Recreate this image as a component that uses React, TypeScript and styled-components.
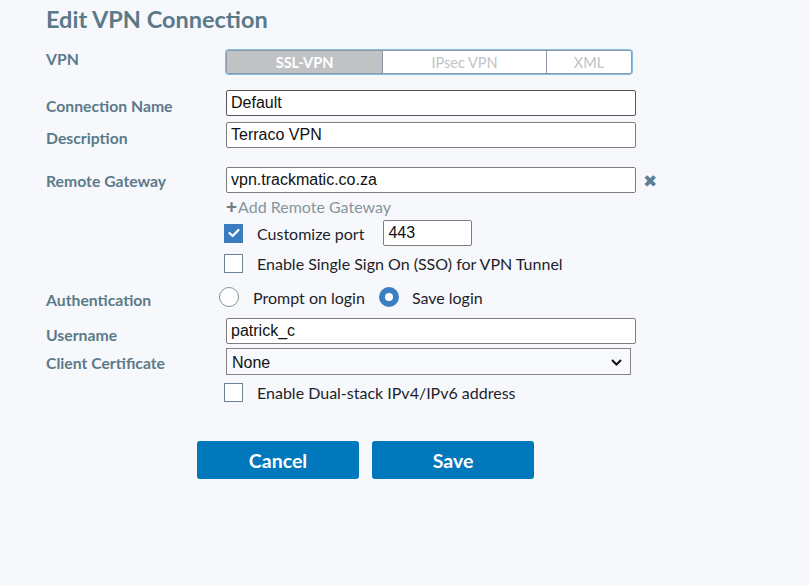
import React from "react";
import styled, { createGlobalStyle } from "styled-components";

const Global = createGlobalStyle`
  html, body { margin: 0; padding: 0; background: #f7f8fb; }
  body { font-family: Lato, "Open Sans", sans-serif; }
`;

const Page = styled.div`
  width: 809px;
  height: 585px;
  background: #f7f8fb;
  padding-left: 46px;
  box-sizing: border-box;
  display: flex;
  flex-direction: column;
`;

const Title = styled.h1`
  margin: 5px 0 0 0;
  font-family: Lato, sans-serif;
  font-size: 23.5px;
  line-height: 28px;
  font-weight: 700;
  color: #5a7989;
`;

const Row = styled.div<{ $mt: number; $h: number }>`
  display: grid;
  grid-template-columns: 180px 1fr;
  align-items: center;
  margin-top: ${(p) => p.$mt}px;
  height: ${(p) => p.$h}px;
`;

const Label = styled.div<{ $dy?: number }>`
  font-size: 15.75px;
  font-weight: 700;
  color: #5b7a8a;
  position: relative;
  top: ${(p) => p.$dy ?? 0}px;
`;

const Field = styled.div<{ $ml?: number }>`
  display: flex;
  align-items: center;
  height: 100%;
  margin-left: ${(p) => p.$ml ?? 0}px;
`;

const Segmented = styled.div`
  display: flex;
  width: 406px;
  height: 24px;
  box-sizing: border-box;
  border: 1px solid #8d99a4;
  border-radius: 3px;
  box-shadow: 0 0 0 1px #86bde6;
  overflow: hidden;
  background: #fff;
`;

const Segment = styled.div<{ $w: number; $active?: boolean }>`
  width: ${(p) => p.$w}px;
  display: flex;
  align-items: center;
  justify-content: center;
  font-size: 14.5px;
  font-weight: ${(p) => (p.$active ? 700 : 400)};
  color: ${(p) => (p.$active ? "#ffffff" : "#c0c3c8")};
  background: ${(p) => (p.$active ? "#c1c2c4" : "#ffffff")};
  border-left: ${(p) => (p.$active ? "none" : "1px solid #8d99a4")};
  box-sizing: border-box;
`;

const TextInput = styled.input<{ $w?: number; $dark?: boolean; $ml?: number }>`
  width: ${(p) => p.$w ?? 410}px;
  height: 26px;
  margin-left: ${(p) => p.$ml ?? 0}px;
  box-sizing: border-box;
  border: 1px solid ${(p) => (p.$dark ? "#555" : "#7d7d7d")};
  border-radius: 2px;
  background: #fff;
  padding: 0 4px;
  font-family: "Liberation Sans", Arial, sans-serif;
  font-size: 16px;
  color: #111;
  outline: none;
`;

const RemoveIcon = styled.span`
  margin-left: 7px;
  font-size: 17px;
  color: #5c7f95;
  line-height: 1;
`;

const AddLink = styled.div`
  display: flex;
  align-items: center;
  font-size: 16px;
  color: #86959d;
`;

const Plus = styled.span`
  font-weight: 900;
  font-size: 19px;
  color: #6f7f88;
  margin-right: 1px;
`;

const Check = styled.span<{ $on?: boolean }>`
  width: 19px;
  height: 19px;
  box-sizing: border-box;
  margin-left: -2px;
  border: 1px solid ${(p) => (p.$on ? "#3b7bbf" : "#6f8393")};
  background: ${(p) => (p.$on ? "#3b7bbf" : "#fff")};
  display: inline-flex;
  align-items: center;
  justify-content: center;
  flex: none;
`;

const OptText = styled.span<{ $ml: number }>`
  margin-left: ${(p) => p.$ml}px;
  font-size: 16px;
  color: #1d1f2b;
`;

const Radio = styled.span<{ $on?: boolean; $ml?: number }>`
  width: 20px;
  height: 20px;
  box-sizing: border-box;
  border-radius: 50%;
  margin-left: ${(p) => p.$ml ?? 0}px;
  border: ${(p) => (p.$on ? "6px solid #3a7fc1" : "1px solid #7f929c")};
  background: #fff;
  flex: none;
`;

const SelectWrap = styled.div`
  position: relative;
  width: 405px;
  height: 27px;
`;

const Select = styled.select`
  appearance: none;
  width: 100%;
  height: 100%;
  box-sizing: border-box;
  border: 1px solid #858585;
  border-radius: 0;
  background: #f8f9fc;
  padding: 2px 5px 0;
  font-family: "Liberation Sans", Arial, sans-serif;
  font-size: 16px;
  color: #111;
  outline: none;
`;

const Chevron = styled.svg`
  position: absolute;
  right: 9px;
  top: 11px;
  pointer-events: none;
`;

const Buttons = styled.div`
  display: flex;
  gap: 13px;
  margin-top: 37px;
  margin-left: 151px;
`;

const Button = styled.button`
  width: 162px;
  height: 38px;
  border: none;
  border-radius: 3px;
  background: #0177bc;
  color: #fff;
  font-family: Lato, sans-serif;
  font-size: 19.5px;
  font-weight: 700;
  cursor: pointer;
`;

const CheckMark = () => (
  <svg width="12" height="10" viewBox="0 0 12 10">
    <path d="M1.5 5 L4.6 8 L10.5 2" fill="none" stroke="#fff" strokeWidth="2.2" strokeLinecap="round" strokeLinejoin="round" />
  </svg>
);

export default function App() {
  return (
    <>
      <Global />
      <Page>
        <Title>Edit VPN Connection</Title>

        <Row $mt={17} $h={24}>
          <Label $dy={-4}>VPN</Label>
          <Field>
            <Segmented>
              <Segment $w={155} $active>SSL-VPN</Segment>
              <Segment $w={164}>IPsec VPN</Segment>
              <Segment $w={85}>XML</Segment>
            </Segmented>
          </Field>
        </Row>

        <Row $mt={16} $h={26}>
          <Label $dy={2}>Connection Name</Label>
          <Field>
            <TextInput $dark defaultValue="Default" />
          </Field>
        </Row>

        <Row $mt={6} $h={26}>
          <Label $dy={2}>Description</Label>
          <Field>
            <TextInput defaultValue="Terraco VPN" />
          </Field>
        </Row>

        <Row $mt={19} $h={26}>
          <Label $dy={0}>Remote Gateway</Label>
          <Field>
            <TextInput defaultValue="vpn.trackmatic.co.za" />
            <RemoveIcon>✖</RemoveIcon>
          </Field>
        </Row>

        <Row $mt={2} $h={20}>
          <span />
          <AddLink>
            <Plus>+</Plus>Add Remote Gateway
          </AddLink>
        </Row>

        <Row $mt={5} $h={26}>
          <span />
          <Field>
            <Check $on>
              <CheckMark />
            </Check>
            <OptText $ml={14}>Customize port</OptText>
            <TextInput $w={89} $ml={19} defaultValue="443" />
          </Field>
        </Row>

        <Row $mt={5} $h={24}>
          <span />
          <Field>
            <Check />
            <OptText $ml={14}>Enable Single Sign On (SSO) for VPN Tunnel</OptText>
          </Field>
        </Row>

        <Row $mt={10} $h={24}>
          <Label $dy={2}>Authentication</Label>
          <Field $ml={-7}>
            <Radio />
            <OptText $ml={14}>Prompt on login</OptText>
            <Radio $on $ml={14} />
            <OptText $ml={13}>Save login</OptText>
          </Field>
        </Row>

        <Row $mt={9} $h={26}>
          <Label $dy={3}>Username</Label>
          <Field>
            <TextInput defaultValue="patrick_c" />
          </Field>
        </Row>

        <Row $mt={4} $h={27}>
          <Label $dy={1}>Client Certificate</Label>
          <Field>
            <SelectWrap>
              <Select defaultValue="None">
                <option>None</option>
              </Select>
              <Chevron width="11" height="7" viewBox="0 0 11 7">
                <path d="M1 1 L5.5 5.5 L10 1" fill="none" stroke="#111" strokeWidth="2" />
              </Chevron>
            </SelectWrap>
          </Field>
        </Row>

        <Row $mt={5} $h={24}>
          <span />
          <Field>
            <Check />
            <OptText $ml={14}>Enable Dual-stack IPv4/IPv6 address</OptText>
          </Field>
        </Row>

        <Buttons>
          <Button>Cancel</Button>
          <Button>Save</Button>
        </Buttons>
      </Page>
    </>
  );
}
